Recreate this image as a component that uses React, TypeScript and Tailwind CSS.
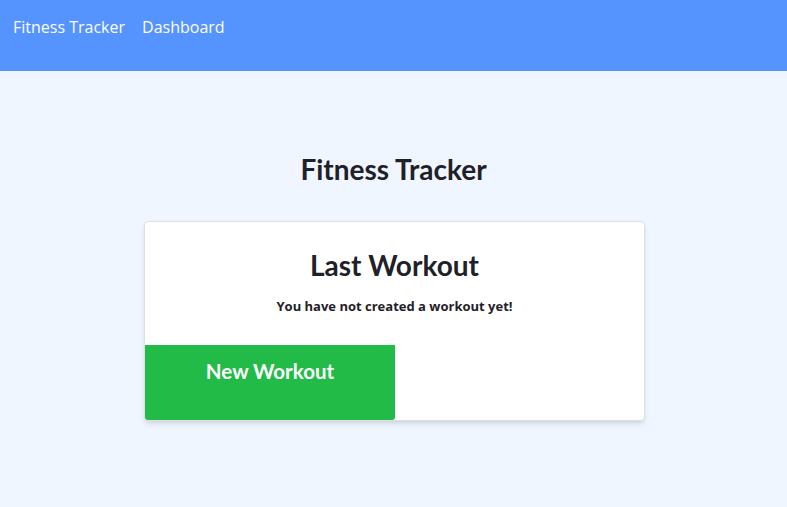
import React from "react";

export default function App() {
  return (
    <div className="min-h-[507px] bg-[#eff6ff] font-['Open_Sans',sans-serif]">
      <nav className="h-[71px] bg-[#5593fe] flex items-start pt-[15px] pl-[13px] gap-[17px] text-white text-[16px]">
        <a href="#">Fitness Tracker</a>
        <a href="#">Dashboard</a>
      </nav>
      <main className="flex flex-col items-center">
        <h1 className="mt-[77px] text-[28px] leading-[42px] font-bold text-[#1f2128] font-['Lato',sans-serif]">
          Fitness Tracker
        </h1>
        <div className="mt-[31px] ml-[2px] w-[501px] h-[200px] bg-white rounded-[4px] border border-[#dcdfe4] shadow-md flex flex-col overflow-hidden">
          <h2 className="mt-[22px] text-center text-[28px] leading-[42px] font-bold text-[#1f2128] font-['Lato',sans-serif]">
            Last Workout
          </h2>
          <p className="mt-[11px] text-center text-[13px] font-bold text-[#1f2128]">
            You have not created a workout yet!
          </p>
          <button className="mt-auto w-[250px] h-[75px] bg-[#22bb48] text-white text-[20.5px] font-bold font-['Lato',sans-serif] rounded-br-[3px] flex justify-center pt-[11px]">
            New Workout
          </button>
        </div>
      </main>
    </div>
  );
}
